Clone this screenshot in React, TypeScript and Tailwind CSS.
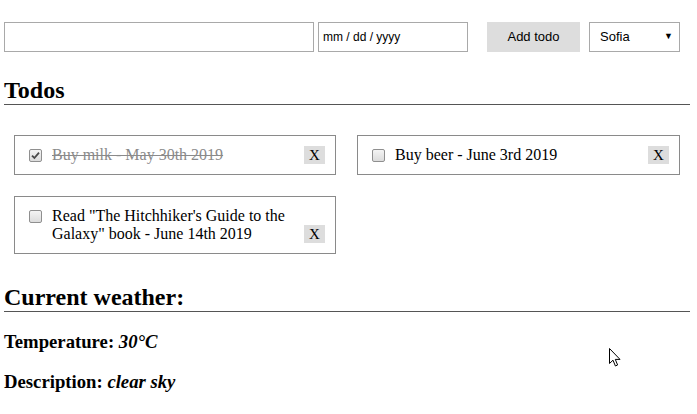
import React from 'react';

type Todo = { id: number; text: string; done: boolean };

const todos: Todo[] = [
  { id: 1, text: 'Buy milk - May 30th 2019', done: true },
  { id: 2, text: 'Buy beer - June 3rd 2019', done: false },
  { id: 3, text: 'Read "The Hitchhiker\'s Guide to the Galaxy" book - June 14th 2019', done: false },
];

function Checkbox({ checked }: { checked: boolean }) {
  return (
    <span className="flex h-[13px] w-[13px] shrink-0 items-center justify-center rounded-[2px] border border-[#8f8f8f] bg-gradient-to-b from-[#f4f4f4] to-[#dcdcdc]">
      {checked && (
        <svg width="9" height="9" viewBox="0 0 9 9">
          <path d="M1 4.6 L3.4 7 L8 1.6" fill="none" stroke="#4a4a4a" strokeWidth="1.8" />
        </svg>
      )}
    </span>
  );
}

function TodoCard({ todo }: { todo: Todo }) {
  return (
    <div className="flex items-end border border-[#8a8a8a] py-[10px] pl-[14px] pr-[10px]">
      <div className="flex min-w-0 flex-1 items-start gap-[10px]">
        <span className="mt-[3px]">
          <Checkbox checked={todo.done} />
        </span>
        <span className={`max-w-[240px] text-[16px] leading-[18px] ${todo.done ? 'text-[#8a8a8a] line-through' : 'text-black'}`}>{todo.text}</span>
      </div>
      <button className="h-[18px] w-[21px] bg-[#dddddd] text-[15px] leading-[18px] text-black">X</button>
    </div>
  );
}

export default function App() {
  return (
    <div className="relative min-h-[414px] w-[697px] bg-white font-['Liberation_Serif',serif] text-black">
      <div className="w-[690px] pl-[4px] pt-[22px]">
        <div className="flex items-center">
          <input type="text" className="h-[30px] w-[310px] border border-[#a9a9a9] bg-white px-2 outline-none" />
          <div className="ml-[4px] flex h-[30px] w-[150px] items-center border border-[#a9a9a9] pl-[4px] font-['Liberation_Sans',sans-serif] text-[12px]">
            mm / dd / yyyy
          </div>
          <button className="ml-[19px] h-[30px] w-[93px] bg-[#dddddd] font-['Liberation_Sans',sans-serif] text-[13px] text-black">Add todo</button>
          <div className="ml-[9px] flex h-[30px] w-[91px] items-center justify-between border border-[#a9a9a9] pl-[10px] pr-[6px] font-['Liberation_Sans',sans-serif] text-[13px]">
            <span>Sofia</span>
            <span className="text-[9px]">▼</span>
          </div>
        </div>

        <h2 className="mt-[24px] border-b border-[#555555] text-[24px] font-bold leading-[28px]">Todos</h2>

        <div className="ml-[10px] mt-[30px] grid grid-cols-[322px_323px] items-start gap-x-[21px] gap-y-[21px]">
          {todos.map((todo) => (
            <TodoCard key={todo.id} todo={todo} />
          ))}
        </div>

        <h2 className="mt-[29px] border-b border-[#555555] text-[24px] font-bold leading-[28px]">Current weather:</h2>

        <h3 className="mt-[19px] text-[18.72px] font-bold leading-[21px]">
          Temperature: <em>30°C</em>
        </h3>
        <h3 className="mt-[19px] text-[18.72px] font-bold leading-[21px]">
          Description: <em>clear sky</em>
        </h3>
      </div>

      {/* mouse pointer in the screenshot */}
      <svg className="absolute left-[609px] top-[348px]" width="12" height="20" viewBox="0 0 12 20">
        <path d="M0.5 0.5 L0.5 15.5 L4 12.2 L6.4 18 L8.6 17 L6.3 11.4 L11 11.4 Z" fill="white" stroke="black" strokeWidth="1" strokeLinejoin="round" />
      </svg>
    </div>
  );
}
